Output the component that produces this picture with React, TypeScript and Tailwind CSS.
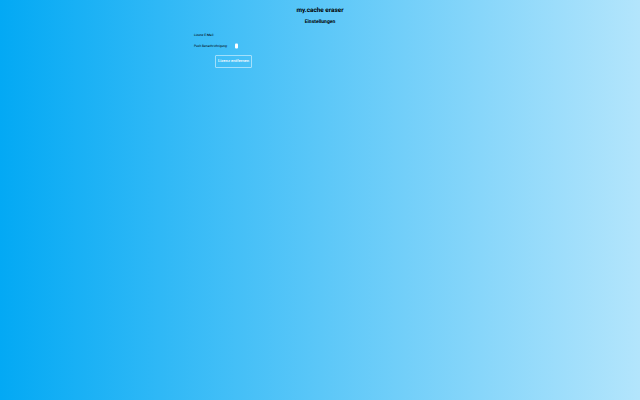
export default function App() {
  return (
    <div className="h-[400px] w-[640px] overflow-hidden bg-linear-to-r/srgb from-[#03a9f4] to-[#b3e5fc] font-['Roboto',sans-serif] text-black [text-rendering:geometricPrecision]">
      <h1 className="pt-[4.5px] text-center text-[6.4px] leading-[10px] font-bold">my.cache eraser</h1>
      <h2 className="pt-[3.5px] text-center text-[5px] leading-[8px] font-bold">Einstellungen</h2>
      <div className="ml-[194px] w-[252px] pt-[7px]">
        <div className="text-[3.3px] leading-[5px]">Lizenz E-Mail:</div>
        <div className="mt-[5px] flex h-[7px] items-center">
          <span className="w-[40px] text-[3.2px] leading-[5px] whitespace-nowrap">Push Benachrichtigung:</span>
          <span className="ml-[0.5px] h-[5px] w-[3px] -translate-y-[0.5px] rounded-[1px] bg-white" />
        </div>
        <button className="mt-[5px] ml-[21px] flex h-[13px] w-[37px] items-center justify-center rounded-[1px] border border-white/50 text-[4.2px] font-medium whitespace-nowrap text-white">
          Lizenz entfernen
        </button>
      </div>
    </div>
  );
}
